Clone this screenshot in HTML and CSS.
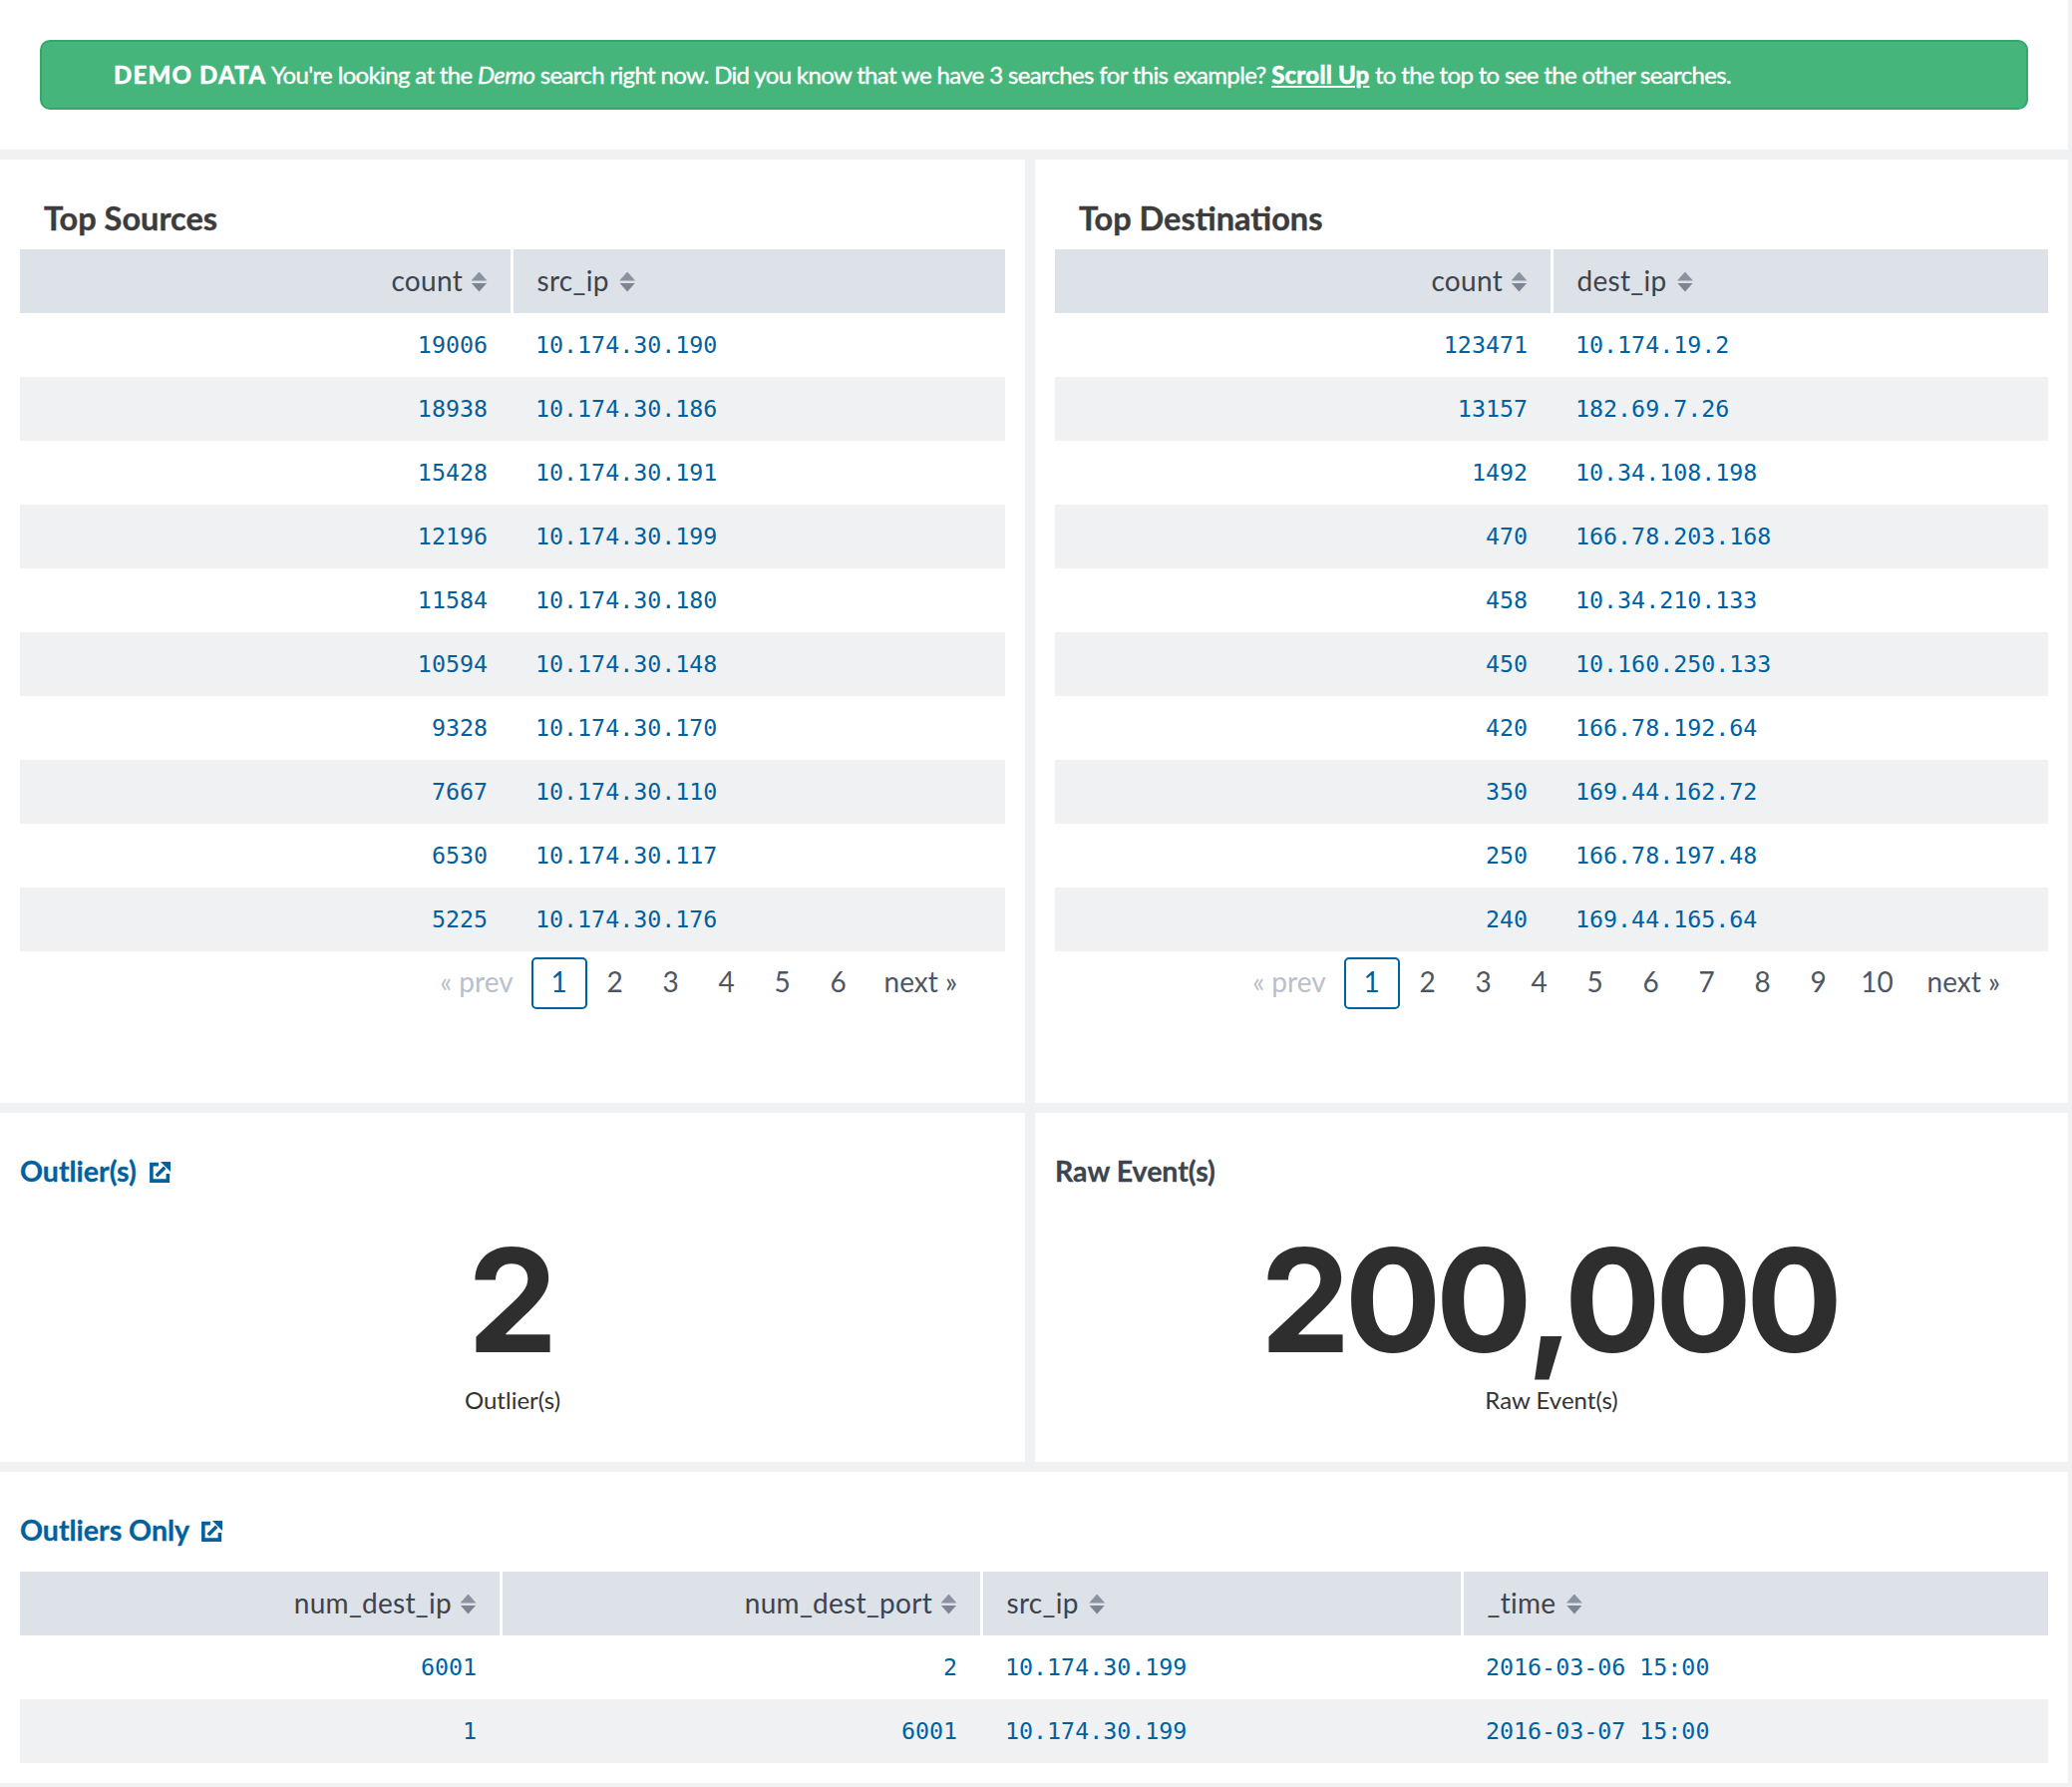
FILE: index.html
```html
<!DOCTYPE html>
<html lang="en">
  <head>
    <meta charset="UTF-8" />
    <title>Outliers</title>
    <link rel="stylesheet" href="styles.css">
  </head>
  <body>
    <div class="row banner_row">
      <div class="banner">
        <b class="demo">DEMO DATA</b> You're looking at the <i>Demo</i> search right now. Did you know that we have 3 searches for this example? <a href="#">Scroll Up</a> to the top to see the other searches.
      </div>
    </div>

    <div class="row two">
      <div class="panel tall">
        <h2 class="title indent">Top Sources</h2>
        <table class="tbl">
          <colgroup><col class="col_src"><col></colgroup>
          <thead>
            <tr><th class="num">count <span class="sort"></span></th><th>src_ip <span class="sort"></span></th></tr>
          </thead>
          <tbody>
            <tr><td class="num">19006</td><td>10.174.30.190</td></tr>
            <tr><td class="num">18938</td><td>10.174.30.186</td></tr>
            <tr><td class="num">15428</td><td>10.174.30.191</td></tr>
            <tr><td class="num">12196</td><td>10.174.30.199</td></tr>
            <tr><td class="num">11584</td><td>10.174.30.180</td></tr>
            <tr><td class="num">10594</td><td>10.174.30.148</td></tr>
            <tr><td class="num">9328</td><td>10.174.30.170</td></tr>
            <tr><td class="num">7667</td><td>10.174.30.110</td></tr>
            <tr><td class="num">6530</td><td>10.174.30.117</td></tr>
            <tr><td class="num">5225</td><td>10.174.30.176</td></tr>
          </tbody>
        </table>
        <div class="pager">
          <span class="off">« prev</span>
          <span class="cur">1</span>
          <span class="pg">2</span><span class="pg">3</span><span class="pg">4</span><span class="pg">5</span><span class="pg">6</span>
          <span class="next">next »</span>
        </div>
      </div>
      <div class="panel tall">
        <h2 class="title indent">Top Destinations</h2>
        <table class="tbl">
          <colgroup><col class="col_dest"><col></colgroup>
          <thead>
            <tr><th class="num">count <span class="sort"></span></th><th>dest_ip <span class="sort"></span></th></tr>
          </thead>
          <tbody>
            <tr><td class="num">123471</td><td>10.174.19.2</td></tr>
            <tr><td class="num">13157</td><td>182.69.7.26</td></tr>
            <tr><td class="num">1492</td><td>10.34.108.198</td></tr>
            <tr><td class="num">470</td><td>166.78.203.168</td></tr>
            <tr><td class="num">458</td><td>10.34.210.133</td></tr>
            <tr><td class="num">450</td><td>10.160.250.133</td></tr>
            <tr><td class="num">420</td><td>166.78.192.64</td></tr>
            <tr><td class="num">350</td><td>169.44.162.72</td></tr>
            <tr><td class="num">250</td><td>166.78.197.48</td></tr>
            <tr><td class="num">240</td><td>169.44.165.64</td></tr>
          </tbody>
        </table>
        <div class="pager">
          <span class="off">« prev</span>
          <span class="cur">1</span>
          <span class="pg">2</span><span class="pg">3</span><span class="pg">4</span><span class="pg">5</span><span class="pg">6</span><span class="pg">7</span><span class="pg">8</span><span class="pg">9</span><span class="pg wide">10</span>
          <span class="next">next »</span>
        </div>
      </div>
    </div>

    <div class="row two">
      <div class="panel single">
        <h2 class="sub link">Outlier(s) <svg class="ext" viewBox="0 0 20 20"><path class="ext_box" d="M8.500 2.500H1.800v15.700h15.700v-6.700M6.500 13.500L14.500 5.500" /><path d="M10.500 0H20V9.500Z" /></svg></h2>
        <div class="big">2</div>
        <div class="under">Outlier(s)</div>
      </div>
      <div class="panel single">
        <h2 class="sub">Raw Event(s)</h2>
        <div class="big">200<span class="comma">,</span>000</div>
        <div class="under">Raw Event(s)</div>
      </div>
    </div>

    <div class="row">
      <div class="panel bottom">
        <h2 class="sub link">Outliers Only <svg class="ext" viewBox="0 0 20 20"><path class="ext_box" d="M8.500 2.500H1.800v15.700h15.700v-6.700M6.500 13.500L14.500 5.500" /><path d="M10.500 0H20V9.500Z" /></svg></h2>
        <table class="tbl">
          <colgroup><col class="col_four"><col class="col_four"><col class="col_four"><col></colgroup>
          <thead>
            <tr>
              <th class="num">num_dest_ip <span class="sort"></span></th>
              <th class="num">num_dest_port <span class="sort"></span></th>
              <th>src_ip <span class="sort"></span></th>
              <th>_time <span class="sort"></span></th>
            </tr>
          </thead>
          <tbody>
            <tr><td class="num">6001</td><td class="num">2</td><td>10.174.30.199</td><td>2016-03-06 15:00</td></tr>
            <tr><td class="num">1</td><td class="num">6001</td><td>10.174.30.199</td><td>2016-03-07 15:00</td></tr>
          </tbody>
        </table>
      </div>
    </div>
  </body>
</html>
```

FILE: styles.css
```css
* {
  margin: 0;
  padding: 0;
  box-sizing: border-box;
}
body {
  background: #f0f1f3;
  font-family: "Lato", "Liberation Sans", sans-serif;
  color: #3c444d;
  width: 2074px;
  height: 1792px;
  overflow: hidden;
}
.row {
  display: flex;
  gap: 10px;
  margin-bottom: 10px;
}
.banner_row {
  background: #fff;
  height: 150px;
  padding: 40px 40px 0 40px;
}
.banner {
  width: 100%;
  height: 70px;
  background: #45b57b;
  border: 2px solid #35a66c;
  border-radius: 10px;
  padding-left: 72px;
  color: #fff;
  font-size: 24px;
  line-height: 66px;
  letter-spacing: -0.65px;
  -webkit-text-stroke: 0.4px #fff;
}
.demo {
  letter-spacing: 1.2px;
  font-weight: 900;
}
.banner a {
  color: #fff;
  font-weight: 900;
  letter-spacing: 0.2px;
}
.panel {
  background: #fff;
  padding: 0 20px;
}
.panel.tall {
  height: 946px;
  flex: 1;
}
.panel.single {
  height: 350px;
  flex: 1;
}
.panel.bottom {
  width: 100%;
  height: 312px;
}
.row.two .panel:first-child {
  flex: 0 0 1028px;
}
.title {
  font-size: 32.5px;
  font-weight: 700;
  line-height: 40px;
  padding-top: 39px;
  height: 90px;
  color: #3c3c3c;
  -webkit-text-stroke: 0.4px #3c3c3c;
}
.indent {
  padding-left: 24px;
}
.sub {
  font-size: 28.5px;
  font-weight: 700;
  line-height: 34px;
  padding-top: 41px;
  color: #3c444d;
  -webkit-text-stroke: 0.3px currentColor;
}
.panel.bottom .sub {
  margin-bottom: 25px;
}
.link {
  color: #00619f;
}
.ext {
  width: 21px;
  height: 21px;
  margin-left: 6px;
  vertical-align: -1px;
  fill: #00619f;
  stroke: none;
}
.ext .ext_box {
  fill: none;
  stroke: #00619f;
  stroke-width: 3.400;
}
.col_src {
  width: 493px;
}
.col_dest {
  width: 498px;
}
.col_four {
  width: 482px;
}
.tbl {
  width: 100%;
  border-collapse: collapse;
  table-layout: fixed;
}
.tbl th {
  height: 64px;
  background: #dde1e8;
  border-left: 3px solid #fff;
  padding: 0 23px 3px 24px;
  font-size: 28px;
  font-weight: 400;
  letter-spacing: 0.3px;
  text-align: left;
}
.tbl th:first-child {
  border-left: 0;
}
.tbl td {
  height: 64px;
  padding: 0 24px 2px;
  font-family: "DejaVu Sans Mono", monospace;
  font-size: 23.300px;
  color: #00619f;
}
.tbl tbody tr:nth-child(even) {
  background: #f0f1f3;
}
.tbl .num {
  text-align: right;
}
.sort {
  display: inline-flex;
  flex-direction: column;
  gap: 2px;
  width: 16px;
  margin-left: 3px;
  vertical-align: 10px;
  margin-bottom: -10px;
}
.num .sort {
  margin-left: 1px;
}
.sort::before,
.sort::after {
  content: "";
  display: block;
  width: 16px;
  height: 9px;
}
.sort::before {
  background: #8c93a0;
  clip-path: polygon(50% 0, 100% 100%, 0 100%);
}
.sort::after {
  background: #7d8593;
  clip-path: polygon(0 0, 100% 0, 50% 100%);
}
.pager {
  display: flex;
  justify-content: flex-end;
  align-items: center;
  height: 52px;
  margin-top: 6px;
  padding-right: 48px;
  font-size: 28px;
  color: #4f5662;
}
.pager .off {
  color: #b9c0cb;
  margin: -4px 18px 0 0;
}
.pager .cur {
  width: 56px;
  height: 52px;
  border: 2px solid #00619f;
  border-radius: 5px;
  color: #00619f;
  text-align: center;
  line-height: 44px;
}
.pager .pg {
  min-width: 56px;
  margin-top: -4px;
  text-align: center;
}
.pager .wide {
  min-width: 62px;
  margin-right: 1px;
}
.pager .next {
  margin: -4px 0 0 18px;
}
.big {
  font-family: "Inter", sans-serif;
  font-weight: 700;
  font-size: 144px;
  line-height: 150px;
  letter-spacing: -6px;
  padding-right: 6px;
  text-align: center;
  color: #2e2e2e;
  margin-top: 38px;
}
.comma {
  letter-spacing: -10px;
}
.under {
  text-align: center;
  font-size: 24px;
  line-height: 30px;
  margin-top: 10px;
  color: #333;
}
```
